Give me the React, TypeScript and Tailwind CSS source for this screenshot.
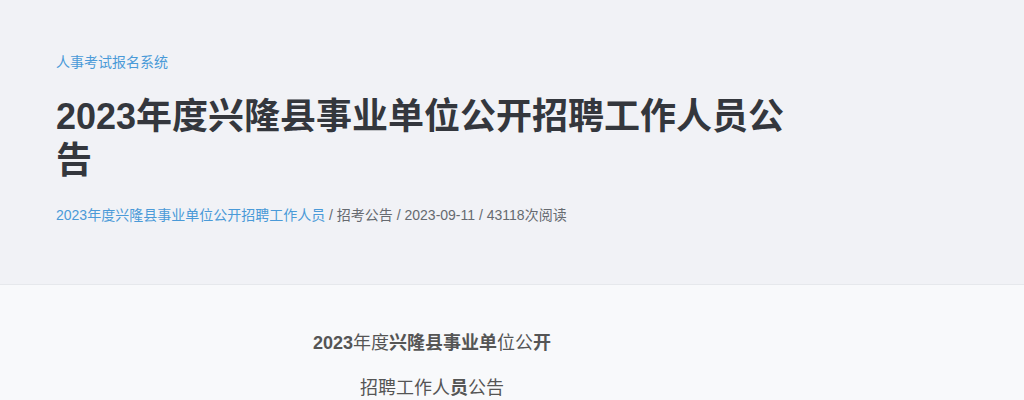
import React from 'react';

const font = 'font-["Liberation_Sans","Noto_Sans_CJK_SC",sans-serif]';

function App() {
  return (
    <main className={`min-h-screen bg-[#f8f9fb] antialiased ${font}`}>
      <header className="bg-[#f1f2f6] border-b border-[#e6e8ec]">
        <div className="max-w-[752px] ml-14 pt-[50px] pb-[59px]">
          <a href="#" className="text-sm leading-5 text-[#4a9ad8]">人事考试报名系统</a>
          <h1 className="mt-[21px] text-[36px] leading-[44px] font-bold text-[#34373d]">
            2023年度兴隆县事业单位公开招聘工作人员公告
          </h1>
          <p className="mt-[22px] text-sm leading-5 text-[#666a70]">
            <a href="#" className="text-[#4a9ad8]">2023年度兴隆县事业单位公开招聘工作人员</a>
            <span> / 招考公告 / 2023-09-11 / 43118次阅读</span>
          </p>
        </div>
      </header>

      <section className="max-w-[752px] ml-14 pt-[36px]">
        <div className="w-[250px] mx-auto text-center text-[18px] leading-[45px] text-[#555]">
          <span className="font-bold">2023</span>年度<span className="font-bold">兴隆县事业单</span>位公<span className="font-bold">开</span>
          招聘工作人<span className="font-bold">员</span>公告
        </div>
      </section>
    </main>
  );
}

export default App;
